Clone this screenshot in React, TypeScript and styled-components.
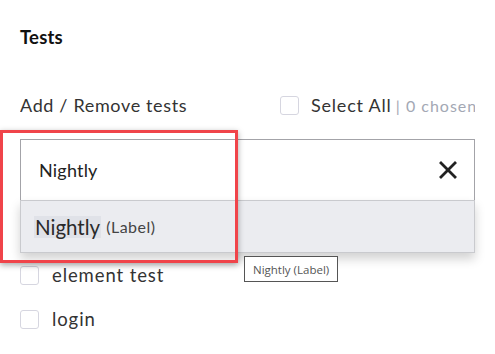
import React from "react";
import styled, { createGlobalStyle } from "styled-components";

const Global = createGlobalStyle`
  html, body { margin: 0; padding: 0; background: #fff; }
  body { font-family: "Lato", "Open Sans", sans-serif; color: #2b2b2b; overflow: hidden; }
`;

const Page = styled.div`
  position: relative;
  width: 495px;
  height: 354px;
  padding: 0 20px 0 20px;
  box-sizing: border-box;
  overflow: hidden;
`;

const Title = styled.h2`
  margin: 0;
  padding-top: 27px;
  font-size: 18.5px;
  font-weight: 700;
  color: #111;
  line-height: 20px;
  letter-spacing: 0.2px;
`;

const HeaderRow = styled.div`
  display: grid;
  grid-template-columns: 260px auto;
  align-items: center;
  margin-top: 46px;
  height: 24px;
  white-space: nowrap;
  overflow: hidden;
`;

const Label = styled.span`
  font-size: 18px;
  letter-spacing: 0.65px;
  color: #333;
`;

const SelectAll = styled.label`
  display: flex;
  align-items: center;
  gap: 12px;
  white-space: nowrap;
`;

const Box = styled.span`
  width: 19px;
  height: 19px;
  border: 1px solid #d6d6e0;
  border-radius: 3px;
  box-sizing: border-box;
  flex: none;
`;

const SelectText = styled.span`
  font-size: 18px;
  letter-spacing: 0.8px;
  color: #333;
`;

const Chosen = styled.span`
  font-size: 16px;
  color: #a3a8b4;
  letter-spacing: 1px;
`;

const SearchWrap = styled.div`
  position: relative;
  margin-top: 22px;
`;

const Input = styled.div`
  display: flex;
  align-items: center;
  justify-content: space-between;
  height: 62px;
  border: 1px solid #a3a3a8;
  box-sizing: border-box;
  padding: 0 17px 0 18px;
`;

const InputText = styled.span`
  font-size: 18px;
  color: #222;
  letter-spacing: 0.2px;
`;

const Dropdown = styled.div`
  position: absolute;
  left: 0;
  right: 0;
  top: 61px;
  height: 53px;
  background: #ebecf0;
  border: 1px solid #c9cace;
  box-sizing: border-box;
  display: flex;
  align-items: center;
  padding-left: 13px;
  box-shadow: 0 6px 10px rgba(0, 0, 0, 0.18);
  z-index: 2;
`;

const Match = styled.span`
  background: #e0e2e8;
  font-size: 20.5px;
  color: #2a2a2a;
  padding: 0 1px;
  line-height: 22px;
`;

const Meta = styled.span`
  font-size: 16px;
  color: #444;
  margin-left: 5px;
  letter-spacing: 0.5px;
`;

const List = styled.ul`
  list-style: none;
  margin: 52px 0 0 0;
  padding: 0;
  display: flex;
  flex-direction: column;
`;

const Item = styled.li`
  display: flex;
  align-items: center;
  gap: 13px;
  height: 44px;
`;

const ItemText = styled.span`
  font-size: 18.5px;
  letter-spacing: 0.9px;
  color: #333;
`;

const Highlight = styled.div`
  position: absolute;
  left: 0;
  top: 130px;
  width: 238px;
  height: 133px;
  border: 3px solid #f0444a;
  box-sizing: border-box;
  box-shadow: 0 2px 6px rgba(0, 0, 0, 0.35);
  z-index: 3;
`;

const Tooltip = styled.div`
  position: absolute;
  left: 244px;
  top: 256px;
  height: 26px;
  padding: 0 8px;
  border: 1px solid #555;
  background: #fff;
  box-sizing: border-box;
  display: flex;
  align-items: center;
  font-family: "Open Sans", "DejaVu Sans", sans-serif;
  font-size: 11.5px;
  color: #555;
  z-index: 4;
`;

const Close = () => (
  <svg width="18" height="18" viewBox="0 0 18 18">
    <path d="M2 2 L16 16 M16 2 L2 16" stroke="#222" strokeWidth="2.8" strokeLinecap="square" />
  </svg>
);

export default function App() {
  return (
    <>
      <Global />
      <Page>
        <Title>Tests</Title>
        <HeaderRow>
          <Label>Add / Remove tests</Label>
          <SelectAll>
            <Box />
            <span>
              <SelectText>Select All</SelectText>{" "}
              <Chosen>| 0 chosen</Chosen>
            </span>
          </SelectAll>
        </HeaderRow>
        <SearchWrap>
          <Input>
            <InputText>Nightly</InputText>
            <Close />
          </Input>
          <Dropdown>
            <Match>Nightly</Match>
            <Meta>(Label)</Meta>
          </Dropdown>
        </SearchWrap>
        <List>
          <Item>
            <Box />
            <ItemText>element test</ItemText>
          </Item>
          <Item>
            <Box />
            <ItemText>login</ItemText>
          </Item>
        </List>
        <Highlight />
        <Tooltip>Nightly (Label)</Tooltip>
      </Page>
    </>
  );
}
